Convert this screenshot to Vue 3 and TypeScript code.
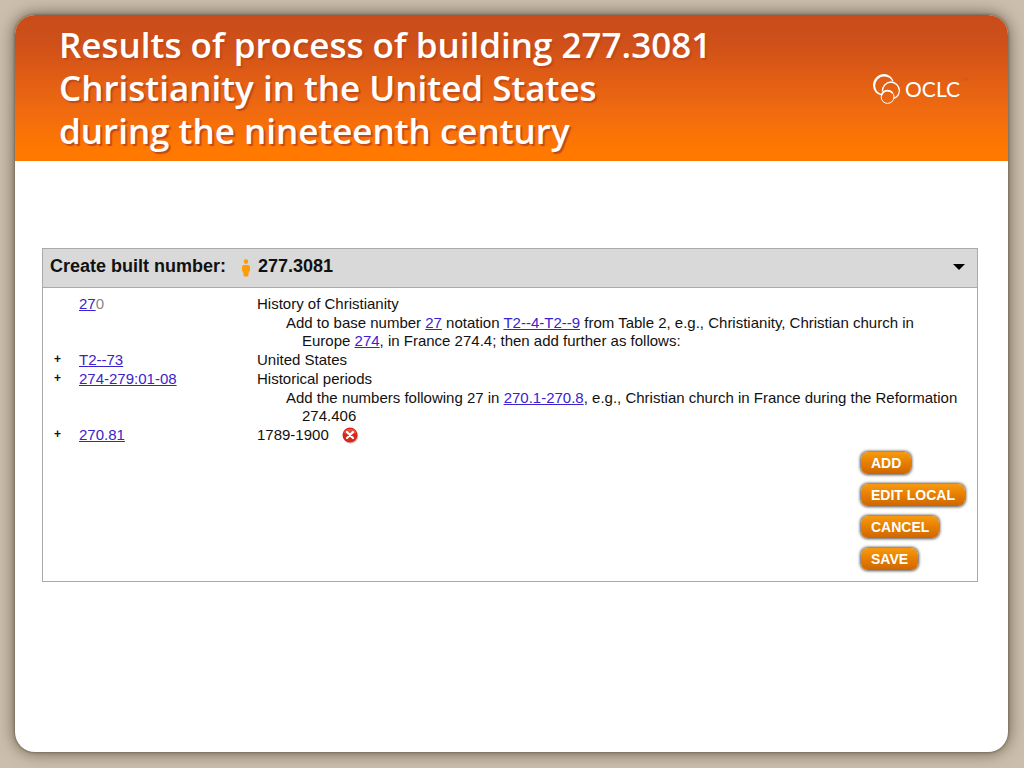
<script setup lang="ts">
interface NotePart {
  text: string
  link?: boolean
}
interface Row {
  plus: boolean
  number: string
  rest?: string
  caption: string
  note?: NotePart[][]
  removable?: boolean
}

const titleLines: string[] = [
  'Results of process of building 277.3081',
  'Christianity in the United States',
  'during the nineteenth century',
]

const rows: Row[] = [
  {
    plus: false,
    number: '27',
    rest: '0',
    caption: 'History of Christianity',
    note: [
      [
        { text: 'Add to base number ' },
        { text: '27', link: true },
        { text: ' notation ' },
        { text: 'T2--4-T2--9', link: true },
        { text: ' from Table 2, e.g., Christianity, Christian church in' },
      ],
      [
        { text: 'Europe ' },
        { text: '274', link: true },
        { text: ', in France 274.4; then add further as follows:' },
      ],
    ],
  },
  { plus: true, number: 'T2--73', caption: 'United States' },
  {
    plus: true,
    number: '274-279:01-08',
    caption: 'Historical periods',
    note: [
      [
        { text: 'Add the numbers following 27 in ' },
        { text: '270.1-270.8', link: true },
        { text: ', e.g., Christian church in France during the Reformation' },
      ],
      [{ text: '274.406' }],
    ],
  },
  { plus: true, number: '270.81', caption: '1789-1900', removable: true },
]

const actions: string[] = ['ADD', 'EDIT LOCAL', 'CANCEL', 'SAVE']
</script>

<template>
  <div class="page">
    <main class="slide">
      <header class="banner">
        <h1 class="title">
          <span v-for="line in titleLines" :key="line" class="title-line">{{ line }}</span>
        </h1>
        <div class="brand">
          <svg class="brand-mark" viewBox="0 0 30 32" aria-hidden="true">
            <path
              fill="#fff"
              fill-rule="evenodd"
              d="M12.5 1A11 11 0 0 1 21.6 8.2L20.4 8.4A9.2 9.2 0 0 0 12.8 3.6A9 9 0 0 0 3.2 12.6A9 9 0 0 0 9.2 21L9 22.2A10.8 10.8 0 0 1 1 12.4A11.4 11.4 0 0 1 12.5 1Z"
            />
            <path
              fill="none"
              stroke="#fff"
              stroke-width="1.3"
              d="M10.4 18.4A9 9 0 0 1 18.8 9A9 9 0 0 1 27.4 17.4A8.8 8.8 0 0 1 21.6 25.4"
            />
            <circle cx="15.6" cy="24" r="6.4" fill="none" stroke="#fff" stroke-width="1" />
            <path
              fill="none"
              stroke="#fff"
              stroke-width="1.8"
              d="M9.6 22A6.3 6.3 0 0 1 15.4 17.6A6.3 6.3 0 0 1 20.6 20"
            />
          </svg>
          <span class="brand-name">OCLC</span>
          <span class="brand-tm">™</span>
        </div>
      </header>

      <section class="panel">
        <div class="panel-head">
          <h2 class="panel-title">Create built number:</h2>
          <svg class="person" viewBox="0 0 8 18" aria-hidden="true">
            <circle cx="4" cy="2.6" r="2.3" fill="#fb9d09" />
            <path
              fill="#fb9d09"
              d="M2 6H6Q8 6 8 8V11Q8 12.5 6.8 13L6.4 16.6Q6.3 17.6 5.2 17.6H2.8Q1.7 17.6 1.6 16.6L1.2 13Q0 12.5 0 11V8Q0 6 2 6Z"
            />
          </svg>
          <span class="panel-number">277.3081</span>
          <button class="toggle" type="button" aria-label="Collapse">
            <svg class="caret" viewBox="0 0 12 6" aria-hidden="true">
              <path d="M0 0H12L6 6Z" fill="#000" />
            </svg>
          </button>
        </div>

        <div class="panel-body">
          <table class="rows">
            <tbody>
              <tr v-for="row in rows" :key="row.number">
                <td class="col-plus">{{ row.plus ? '+' : '' }}</td>
                <td class="col-number">
                  <a href="#">{{ row.number }}</a><span v-if="row.rest" class="rest">{{ row.rest }}</span>
                </td>
                <td class="col-text">
                  <div class="caption">
                    <span>{{ row.caption }}</span>
                    <button v-if="row.removable" class="remove" type="button" aria-label="Remove">
                      <svg class="remove-icon" viewBox="0 0 18 18" aria-hidden="true">
                        <circle cx="9.8" cy="10.2" r="7.6" fill="#000" opacity="0.2" />
                        <circle cx="9" cy="9" r="7.5" fill="#d9261c" />
                        <path d="M2.6 7A7 7 0 0 1 15.4 7Q9 10 2.6 7Z" fill="#ee6a5c" opacity="0.6" />
                        <path
                          d="M6 6L12 12M12 6L6 12"
                          stroke="#fff"
                          stroke-width="2.2"
                          stroke-linecap="round"
                        />
                      </svg>
                    </button>
                  </div>
                  <p v-if="row.note" class="note">
                    <template v-for="(line, i) in row.note" :key="i">
                      <br v-if="i > 0" />
                      <template v-for="(part, j) in line" :key="j">
                        <a v-if="part.link" href="#">{{ part.text }}</a>
                        <template v-else>{{ part.text }}</template>
                      </template>
                    </template>
                  </p>
                </td>
              </tr>
            </tbody>
          </table>

          <div class="actions">
            <button v-for="a in actions" :key="a" class="action" type="button">{{ a }}</button>
          </div>
        </div>
      </section>
    </main>
  </div>
</template>

<style>
body {
  margin: 0;
}
</style>

<style scoped>
.page {
  box-sizing: border-box;
  min-height: 100vh;
  padding: 15px 16px 16px 15px;
  display: flex;
  background: #cbbeac;
  font-family: 'Liberation Sans', Arial, sans-serif;
  color: #111;
}
.slide {
  flex: 1;
  min-width: 0;
  background: #fff;
  border-radius: 20px;
  overflow: hidden;
  box-shadow:
    0 0 3px #5e5240,
    0 0 16px 1px #6e604b;
}
.banner {
  display: flex;
  justify-content: space-between;
  align-items: center;
  box-sizing: border-box;
  min-height: 146px;
  padding: 8px 40px 9px 44px;
  background: linear-gradient(#c84c1b 0%, #cf5019 20%, #f06a10 65%, #ff7800 92%);
}
.title {
  margin: 0;
  font-family: 'Trebuchet MS', 'Open Sans', sans-serif;
  font-size: 35px;
  line-height: 43px;
  font-weight: 600;
  color: #fff;
  text-shadow: 2px 2px 1px #c04a1c;
}
.title-line {
  display: block;
}
.brand {
  display: flex;
  align-items: center;
  color: #fff;
  padding-top: 3px;
}
.brand-mark {
  width: 30px;
  height: 32px;
}
.brand-name {
  margin-left: 3px;
  font-family: Lato, sans-serif;
  font-size: 21px;
  line-height: 24px;
}
.brand-tm {
  font-size: 8px;
  line-height: 16px;
  align-self: flex-start;
  color: #c85a1c;
}
.panel {
  margin: 87px 30px 0 27px;
  border: 1px solid #a9a9a9;
}
.panel-head {
  display: flex;
  align-items: center;
  box-sizing: border-box;
  height: 39px;
  padding: 0 12px 3px 7px;
  background: #d9d9d9;
  border-bottom: 1px solid #a9a9a9;
  font-size: 18px;
  font-weight: 700;
}
.panel-title {
  margin: 0;
  font-size: 18px;
}
.person {
  width: 8px;
  height: 18px;
  margin: 2px 8px 0 16px;
}
.toggle {
  margin-left: auto;
  padding: 0;
  border: 0;
  background: none;
  display: flex;
}
.caret {
  width: 12px;
  height: 6px;
}
.panel-body {
  padding: 6px 10px 11px;
}
.rows {
  width: 100%;
  border-collapse: collapse;
  table-layout: fixed;
  font-size: 15px;
  line-height: 19px;
}
.rows td {
  padding: 0;
  vertical-align: top;
}
.rows .col-plus {
  width: 25px;
  padding-left: 1px;
  font-size: 12px;
  font-weight: 700;
}
.col-number {
  width: 178px;
}
.rows a {
  color: #3a22d0;
}
.rest {
  color: #888;
}
.caption {
  display: flex;
  height: 19px;
  align-items: center;
}
.remove {
  margin-left: 12px;
  padding: 0;
  border: 0;
  background: none;
  display: flex;
}
.remove-icon {
  width: 18px;
  height: 18px;
}
.note {
  margin: 1px 0 0;
  padding-left: 45px;
  text-indent: -16px;
  line-height: 18px;
  white-space: nowrap;
}
.actions {
  display: flex;
  flex-direction: column;
  align-items: flex-start;
  gap: 10px;
  width: 106px;
  margin: 8px 0 0 auto;
}
.action {
  height: 22px;
  padding: 0 10px;
  border: 0;
  border-radius: 7px;
  background: linear-gradient(#f79a10, #e67e00 50%, #cf6600);
  box-shadow: 0 0 3px 1px #5c534c;
  color: #fff;
  font-family: inherit;
  font-size: 14px;
  font-weight: 700;
  line-height: 22px;
  white-space: nowrap;
}
</style>
